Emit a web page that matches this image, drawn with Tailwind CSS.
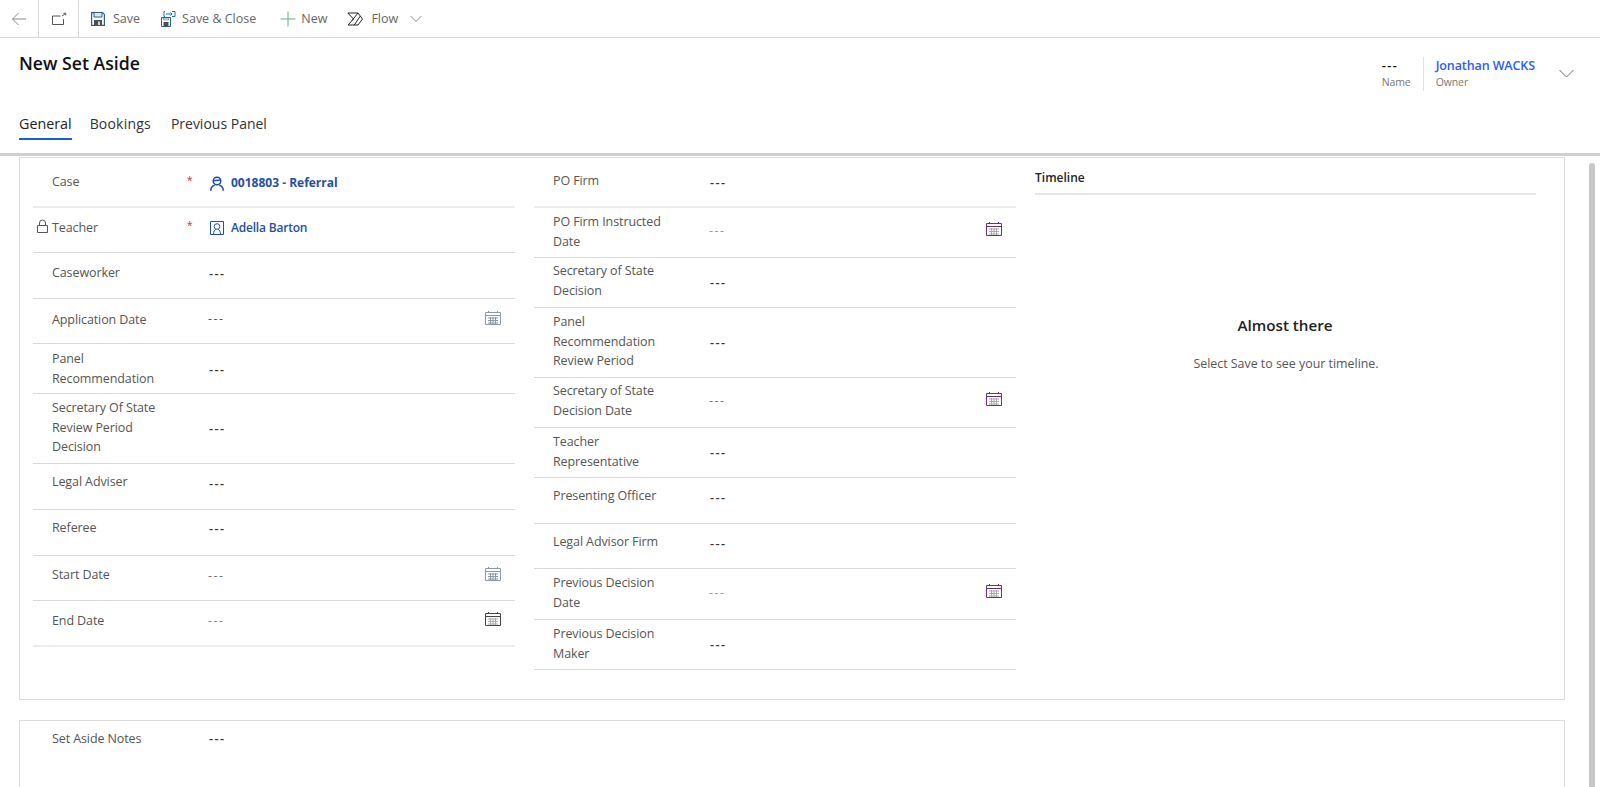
<!DOCTYPE html>
<html lang="en">
  <head>
    <meta charset="UTF-8" />
    <title>New Set Aside</title>
    <script src="https://cdn.jsdelivr.net/npm/@tailwindcss/browser@4"></script>
  </head>
  <body class="h-[787px] overflow-hidden bg-white font-['Open_Sans',sans-serif] text-[12.5px] tracking-[-0.1px] text-[#555]">
    <!-- Command bar -->
    <div class="flex h-[38px] items-center border-b border-[#d8d8d8] tracking-normal text-[#666]">
      <div class="flex h-full w-[39px] items-center justify-center border-r border-[#d8d8d8]">
        <svg class="h-4 w-4" viewBox="0 0 16 16" fill="none" stroke="#888" stroke-width="1"><path d="M15 8H1.500M7.500 2 1.500 8l6 6" /></svg>
      </div>
      <div class="flex h-full w-[40px] items-center justify-center border-r border-[#d8d8d8]">
        <svg class="h-4 w-4" viewBox="0 0 16 16" fill="none" stroke="#555" stroke-width="1"><path d="M12.500 8v5.500h-11V5h8M11 5l3.500-2.500M12.500 2.200h2.200v2.200" /></svg>
      </div>
      <div class="ml-[12px] flex items-center gap-[8px]">
        <svg class="h-[14px] w-[14px]" viewBox="0 0 14 14"><path d="M.6.6h11l1.800 1.800v11H.6z" fill="#fff" stroke="#2c5f8a" stroke-width="1.200" /><path d="M3 1v4h8V1" fill="#dbe7f1" stroke="#2c5f8a" /><path d="M3 8h8v5H3z" fill="#4a4f55" /><path d="M7 9.500h2V13H7z" fill="#cfd6dc" /></svg>
        <span class="pt-[1px]">Save</span>
      </div>
      <div class="ml-[21px] flex items-center gap-[6px]">
        <svg class="h-[16px] w-[15px]" viewBox="0 0 15 16"><path d="M.5 6.500h9v9h-9z" fill="#fff" stroke="#2c5f8a" /><path d="M2.500 11h5v4.500h-5z" fill="#4a4f55" /><path d="M2.500 7h5v2h-5z" fill="#dbe7f1" stroke="#2c5f8a" stroke-width=".5" /><path d="M4 .5H3v5h1M11 .5h3v5h-3M5 3h6M9.500 1.500 11 3 9.500 4.500" fill="none" stroke="#1c6fc2" /></svg>
        <span class="pt-[1px]">Save &amp; Close</span>
      </div>
      <div class="ml-[24px] flex items-center gap-[5px]">
        <svg class="h-[16px] w-[16px]" viewBox="0 0 16 16" fill="none" stroke="#5cb585" stroke-width="1"><path d="M8 .5v15M.5 8h15" /></svg>
        <span class="pt-[1px]">New</span>
      </div>
      <div class="ml-[20px] flex items-center gap-[8px]">
        <svg class="h-[14px] w-[16px]" viewBox="0 0 16 13" fill="none" stroke="#222" stroke-width="1"><path d="M.8.5H11l4.500 6-4.500 6H1l5.500-6zM11 .5 5 8M13.300 3.500 7.300 12.500" /></svg>
        <span class="pt-[1px]">Flow</span>
      </div>
      <svg class="ml-[12px] h-[8px] w-[12px]" viewBox="0 0 12 8" fill="none" stroke="#888" stroke-width="1"><path d="m.5 1 5.500 5.500L11.500 1" /></svg>
    </div>

    <!-- Form header -->
    <div class="relative h-[118px] border-b-[3px] border-[#cfcfcf] px-[19px]">
      <h1 class="pt-[13px] text-[17.700px] leading-[24px] font-semibold tracking-normal text-[#111]">New Set Aside</h1>
      <div class="absolute top-[19px] right-[65px] flex">
        <div class="w-[41px] leading-[17px]">
          <div class="font-semibold tracking-[1.500px] text-black">---</div>
          <div class="text-[10.500px] text-[#777]">Name</div>
        </div>
        <div class="border-l border-[#e2e2e2] pl-[12px] leading-[17px]">
          <div class="font-semibold text-[#2a5cff]">Jonathan WACKS</div>
          <div class="text-[10.500px] text-[#777]">Owner</div>
        </div>
      </div>
      <svg class="absolute top-[31px] right-[26px] h-[9px] w-[15px]" viewBox="0 0 15 9" fill="none" stroke="#666" stroke-width="1"><path d="m.5 1 7 7 7-7" /></svg>
      <div class="absolute top-[73px] left-[19px] flex text-[14px] leading-[26px] tracking-normal text-[#333]">
        <div class="border-b-2 border-[#0f5fd7] pb-[1px] text-[14.300px] font-medium text-[#222]">General</div>
        <div class="ml-[18px] tracking-[0.200px]">Bookings</div>
        <div class="ml-[20px]">Previous Panel</div>
      </div>
    </div>

    <div class="flex">
      <div class="w-[1586px] pt-[1px] pl-[19px]">
        <!-- General section -->
        <div class="grid h-[543px] w-[1546px] grid-cols-[482px_482px_504px] gap-x-[19px] border border-[#dcdcdc] pl-[13px]">
          <div>
            <div class="flex h-[50px] border-b-2 border-[#ececec]">
              <div class="w-[154px] pt-[14px] pl-[19px] leading-[19.500px]">Case</div>
              <div class="w-[22px] pt-[13px] text-[10px] leading-[19.500px] text-[#e0242c]">*</div>
              <div class="flex items-center gap-[7px] pt-[2px] pl-[1px] text-[12px] font-bold tracking-normal text-[#1f4fa8]">
                <svg class="h-[15px] w-[14px]" viewBox="0 0 14 15" fill="none" stroke="#1f4fa8" stroke-width="1.500"><circle cx="7" cy="5" r="3.800" /><path d="M.8 14.800c0-3.500 2.200-5.300 4-5.600M13.200 14.800c0-3.500-2.200-5.300-4-5.600M3.500 4.800 10.500 4" /></svg>
                <span>0018803 - Referral</span>
              </div>
            </div>
            <div class="flex h-[45px] border-b border-[#d9d9d9]">
              <div class="relative w-[154px] pt-[10px] pl-[19px] leading-[19.500px]">
                <svg class="absolute top-[11px] left-[4px] h-[14px] w-[11px]" viewBox="0 0 11 14" fill="none" stroke="#555"><path d="M.5 6.500h10v7H.5zM2.500 6.500V4a3 3 0 0 1 6 0v2.500" /></svg>
                Teacher
              </div>
              <div class="w-[22px] pt-[8px] text-[10px] leading-[19.500px] text-[#e0242c]">*</div>
              <div class="flex items-center gap-[7px] pb-[4px] pl-[1px] text-[12px] font-semibold tracking-[-0.200px] text-[#1f4fa8]">
                <svg class="h-[14px] w-[14px]" viewBox="0 0 14 14" fill="none" stroke="#1f4fa8"><path d="M3 .5H.5v13H3M11 .5h2.500v13H11M3 .5h8M3 13.500h8" /><circle cx="7" cy="5.500" r="2.800" /><path d="M3.500 13c0-2.500 1.200-4 2.300-4.700M10.500 13c0-2.500-1.200-4-2.300-4.700" /></svg>
                <span>Adella Barton</span>
              </div>
            </div>
            <div class="flex h-[46px] border-b border-[#d9d9d9]">
              <div class="w-[176px] pt-[10px] pl-[19px] leading-[19.500px]">Caseworker</div>
              <div class="flex items-center pb-[2px] font-semibold tracking-[1.500px] text-[#333]">---</div>
            </div>
            <div class="flex h-[45px] border-b border-[#d9d9d9]">
              <div class="w-[176px] pt-[11px] pl-[19px] leading-[19.500px]">Application Date</div>
              <div class="flex flex-1 items-center justify-between pr-[14px] pb-[4px]">
                <span class="-ml-[1px] tracking-[1.500px]">---</span>
                <svg class="mb-[4px] h-[15px] w-[16px]" viewBox="0 0 16 15" fill="none" stroke="#8b97a3"><path d="M.5 2.500h15v12H.5zM.5 5.500h15M3.500 1v2M12.500 1v2M3 8h10M3 10.500h10M3 13h10M5.500 7v7M8 7v7M10.500 7v7" /></svg>
              </div>
            </div>
            <div class="flex h-[50px] border-b border-[#d9d9d9]">
              <div class="w-[176px] pt-[5px] pl-[19px] leading-[19.500px]">Panel<br />Recommendation</div>
              <div class="flex items-center pt-[4px] font-semibold tracking-[1.500px] text-[#333]">---</div>
            </div>
            <div class="flex h-[70px] border-b border-[#d9d9d9]">
              <div class="w-[176px] pt-[4px] pl-[19px] leading-[19.500px]">Secretary Of State<br />Review Period<br />Decision</div>
              <div class="flex items-center pt-[2px] font-semibold tracking-[1.500px] text-[#333]">---</div>
            </div>
            <div class="flex h-[46px] border-b border-[#d9d9d9]">
              <div class="w-[176px] pt-[8px] pl-[19px] leading-[19.500px]">Legal Adviser</div>
              <div class="flex items-center pb-[4px] font-semibold tracking-[1.500px] text-[#333]">---</div>
            </div>
            <div class="flex h-[46px] border-b border-[#d9d9d9]">
              <div class="w-[176px] pt-[8px] pl-[19px] leading-[19.500px]">Referee</div>
              <div class="flex items-center pb-[6px] font-semibold tracking-[1.500px] text-[#333]">---</div>
            </div>
            <div class="flex h-[45px] border-b border-[#d9d9d9]">
              <div class="w-[176px] pt-[9px] pl-[19px] leading-[19.500px]">Start Date</div>
              <div class="flex flex-1 items-center justify-between pr-[14px] pb-[4px]">
                <span class="-ml-[1px] tracking-[1.500px] text-[#777]">---</span>
                <svg class="mb-[6px] h-[15px] w-[16px]" viewBox="0 0 16 15" fill="none" stroke="#8b97a3"><path d="M.5 2.500h15v12H.5zM.5 5.500h15M3.500 1v2M12.500 1v2M3 8h10M3 10.500h10M3 13h10M5.500 7v7M8 7v7M10.500 7v7" /></svg>
              </div>
            </div>
            <div class="flex h-[46px] border-b-2 border-[#ececec]">
              <div class="w-[176px] pt-[10px] pl-[19px] leading-[19.500px]">End Date</div>
              <div class="flex flex-1 items-center justify-between pr-[14px] pb-[4px]">
                <span class="-ml-[1px] tracking-[1.500px] text-[#888]">---</span>
                <svg class="mb-[6px] h-[15px] w-[16px]" viewBox="0 0 16 15" fill="none" stroke="#444"><path d="M.5 2.500h15v12H.5zM.5 5.500h15M3.500 1v2M12.500 1v2" /><path d="M3 8h10M3 10.500h10M3 13h10M5.500 7v7M8 7v7M10.500 7v7" stroke="#aaa" /></svg>
              </div>
            </div>
          </div>

          <div>
            <div class="flex h-[50px] border-b-2 border-[#ececec]">
              <div class="w-[176px] pt-[13px] pl-[19px] leading-[19.500px]">PO Firm</div>
              <div class="flex items-center pt-[2px] font-semibold tracking-[1.500px] text-[#333]">---</div>
            </div>
            <div class="flex h-[50px] border-b border-[#d9d9d9]">
              <div class="w-[176px] pt-[4px] pl-[19px] leading-[19.500px]">PO Firm Instructed<br />Date</div>
              <div class="flex flex-1 items-center justify-between pr-[14px] pb-[2px]">
                <span class="-ml-[1px] tracking-[1.500px] text-[#999]">---</span>
                <svg class="mb-[6px] h-[15px] w-[16px]" viewBox="0 0 16 15" fill="none" stroke="#6b2c8a"><path d="M.5 2.500h15v12H.5zM.5 5.500h15M3.500 1v2M12.500 1v2" /><path d="M3 8h10M3 10.500h10M3 13h10M5.500 7v7M8 7v7M10.500 7v7" stroke="#aaa" /></svg>
              </div>
            </div>
            <div class="flex h-[50px] border-b border-[#d9d9d9]">
              <div class="w-[176px] pt-[3px] pl-[19px] leading-[19.500px]">Secretary of State<br />Decision</div>
              <div class="flex items-center pt-[2px] font-semibold tracking-[1.500px] text-[#333]">---</div>
            </div>
            <div class="flex h-[70px] border-b border-[#d9d9d9]">
              <div class="w-[176px] pt-[4px] pl-[19px] leading-[19.500px]">Panel<br />Recommendation<br />Review Period</div>
              <div class="flex items-center pt-[2px] font-semibold tracking-[1.500px] text-[#333]">---</div>
            </div>
            <div class="flex h-[50px] border-b border-[#d9d9d9]">
              <div class="w-[176px] pt-[3px] pl-[19px] leading-[19.500px]">Secretary of State<br />Decision Date</div>
              <div class="flex flex-1 items-center justify-between pr-[14px] pb-[2px]">
                <span class="-ml-[1px] tracking-[1.500px] text-[#777]">---</span>
                <svg class="mb-[6px] h-[15px] w-[16px]" viewBox="0 0 16 15" fill="none" stroke="#6b2c8a"><path d="M.5 2.500h15v12H.5zM.5 5.500h15M3.500 1v2M12.500 1v2" /><path d="M3 8h10M3 10.500h10M3 13h10M5.500 7v7M8 7v7M10.500 7v7" stroke="#aaa" /></svg>
              </div>
            </div>
            <div class="flex h-[50px] border-b border-[#d9d9d9]">
              <div class="w-[176px] pt-[4px] pl-[19px] leading-[19.500px]">Teacher<br />Representative</div>
              <div class="flex items-center pt-[2px] font-semibold tracking-[1.500px] text-[#333]">---</div>
            </div>
            <div class="flex h-[46px] border-b border-[#d9d9d9]">
              <div class="w-[176px] pt-[8px] pl-[19px] leading-[19.500px]">Presenting Officer</div>
              <div class="flex items-center pb-[4px] font-semibold tracking-[1.500px] text-[#333]">---</div>
            </div>
            <div class="flex h-[45px] border-b border-[#d9d9d9]">
              <div class="w-[176px] pt-[8px] pl-[19px] leading-[19.500px]">Legal Advisor Firm</div>
              <div class="flex items-center pb-[4px] font-semibold tracking-[1.500px] text-[#333]">---</div>
            </div>
            <div class="flex h-[51px] border-b border-[#d9d9d9]">
              <div class="w-[176px] pt-[4px] pl-[19px] leading-[19.500px]">Previous Decision<br />Date</div>
              <div class="flex flex-1 items-center justify-between pr-[14px] pb-[2px]">
                <span class="-ml-[1px] tracking-[1.500px] text-[#999]">---</span>
                <svg class="mb-[6px] h-[15px] w-[16px]" viewBox="0 0 16 15" fill="none" stroke="#6b2c8a"><path d="M.5 2.500h15v12H.5zM.5 5.500h15M3.500 1v2M12.500 1v2" /><path d="M3 8h10M3 10.500h10M3 13h10M5.500 7v7M8 7v7M10.500 7v7" stroke="#aaa" /></svg>
              </div>
            </div>
            <div class="flex h-[50px] border-b border-[#d9d9d9]">
              <div class="w-[176px] pt-[4px] pl-[19px] leading-[19.500px]">Previous Decision<br />Maker</div>
              <div class="flex items-center pt-[2px] font-semibold tracking-[1.500px] text-[#333]">---</div>
            </div>
          </div>

          <!-- Timeline -->
          <div>
            <div class="mr-[3px] flex h-[37px] items-center border-b-2 border-[#e6e6e6] pt-[4px] text-[12px] font-semibold tracking-normal text-[#222]">Timeline</div>
            <div class="pt-[118px] pr-[4px] text-center tracking-normal">
              <div class="text-[15.200px] leading-[24px] font-semibold text-[#222]">Almost there</div>
              <div class="pt-[18px] pl-[2px] text-[12.400px] leading-[18px] text-[#555]">Select Save to see your timeline.</div>
            </div>
          </div>
        </div>

        <!-- Notes section -->
        <div class="mt-[20px] flex h-[100px] w-[1546px] border border-b-0 border-[#dcdcdc] pt-[8px] pl-[32px] leading-[20px]">
          <div class="w-[157px]">Set Aside Notes</div>
          <div class="font-semibold tracking-[1.500px] text-[#333]">---</div>
        </div>
      </div>
      <!-- Scrollbar -->
      <div class="mt-[7px] ml-[3px] h-[640px] w-[6px] rounded-full bg-[#c8c8c8]"></div>
    </div>
  </body>
</html>
